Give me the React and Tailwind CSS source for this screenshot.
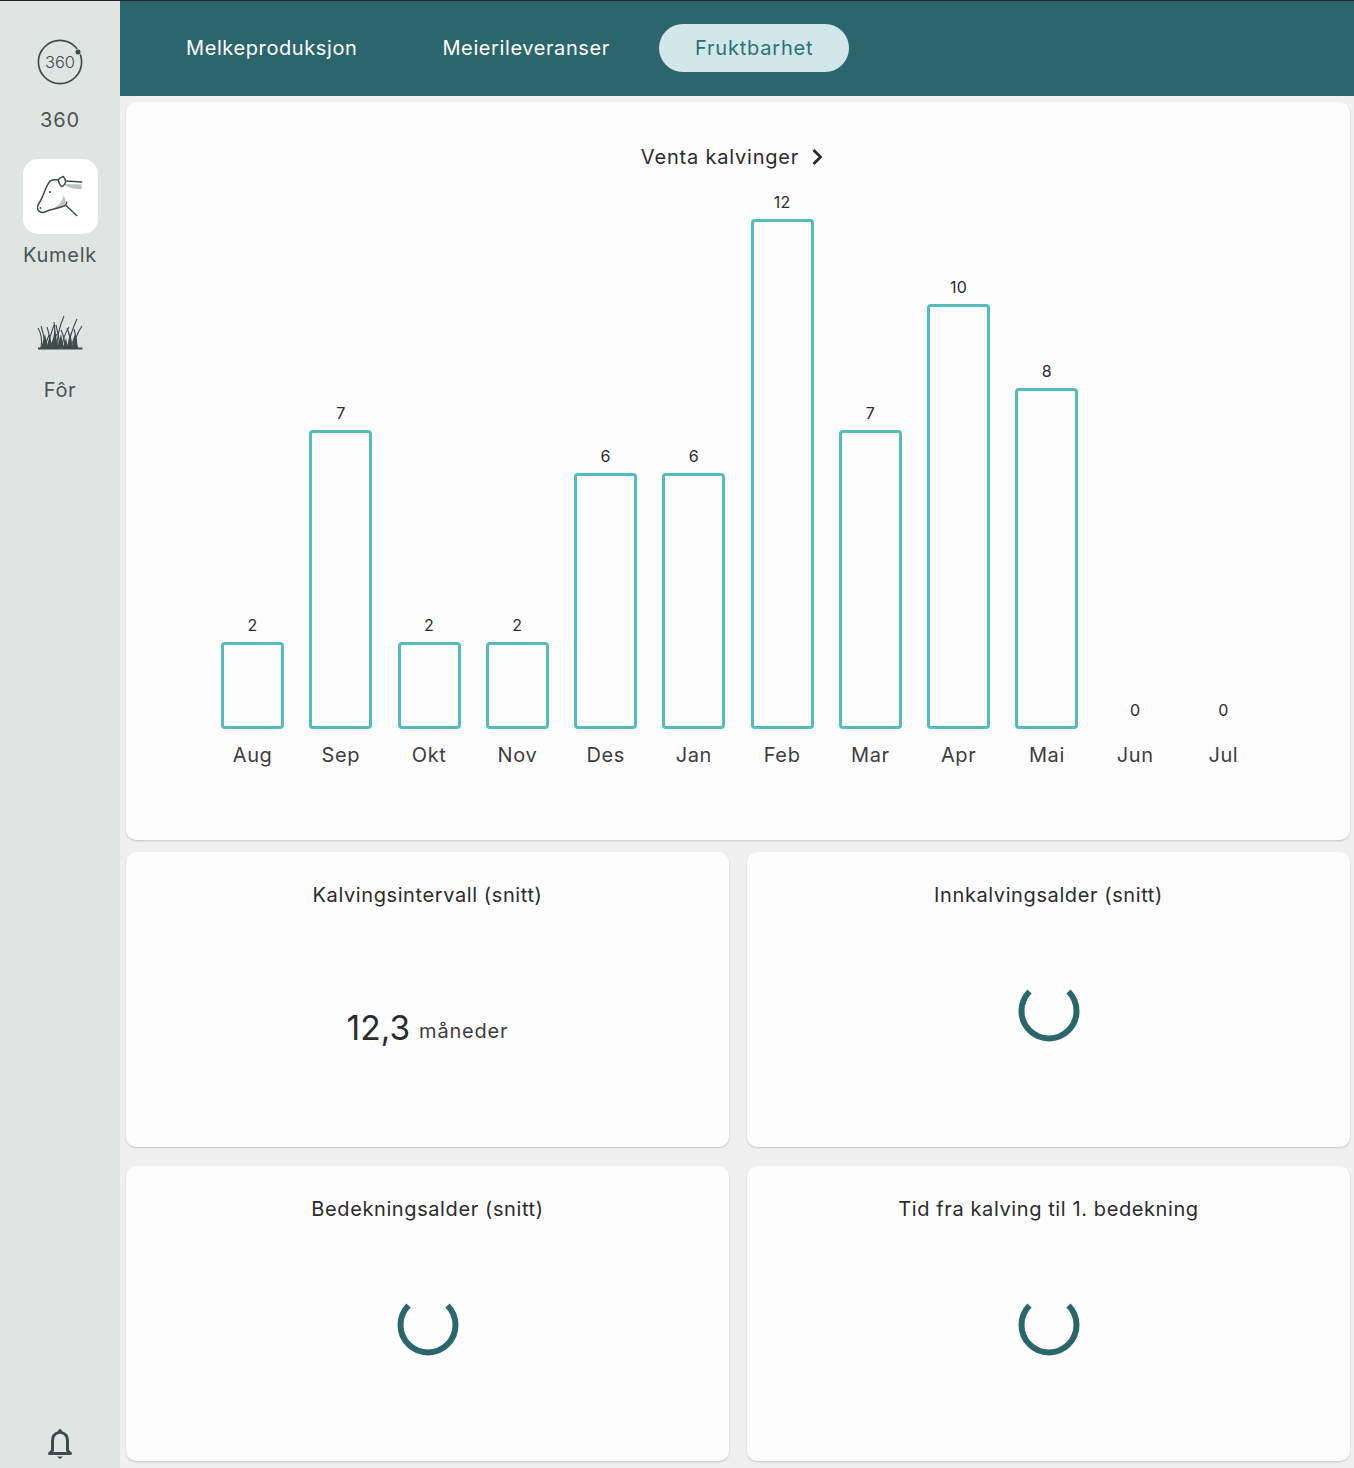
const months = [
  ["Aug", 2], ["Sep", 7], ["Okt", 2], ["Nov", 2], ["Des", 6], ["Jan", 6],
  ["Feb", 12], ["Mar", 7], ["Apr", 10], ["Mai", 8], ["Jun", 0], ["Jul", 0],
];

function Logo360() {
  return (
    <svg width="46" height="46" viewBox="0 0 46 46" fill="none">
      <circle cx="23" cy="23" r="21.6" stroke="#3f4a4b" strokeWidth="1.7" />
      <circle cx="41" cy="13" r="3" fill="#3f4a4b" stroke="#e0e5e4" strokeWidth="0.8" />
      <text x="23" y="28.5" textAnchor="middle" fontSize="16.5" fontWeight="300" fill="#3f4a4b" fontFamily="Inter, sans-serif">360</text>
    </svg>
  );
}

function Cow() {
  return (
    <svg width="46" height="46" viewBox="0 0 46 46" fill="none" strokeLinecap="round" strokeLinejoin="round">
      <path d="M28 10 L44.7 10.500 L44.700 15 Q35 15.500 28 11.500Z" fill="#bcc2c2" />
      <path d="M26.500 21 Q26.500 28 16.500 34.500 Q25 32.500 28.500 29 Q28.500 24 26.500 21Z" fill="#bcc2c2" />
      <path d="M29.700 7 L44.700 8" stroke="#3f4a4b" strokeWidth="1.500" />
      <path d="M21.300 5.800 Q16 5.500 13 7 Q10 11 8 16.500 Q5 25 0.800 31.500 Q0 35.500 1.800 36.800 Q4 38.500 6.500 38.500 Q12 36 18 34.800 Q24 33.500 28 31.500 Q29.500 30 29.700 28" stroke="#3f4a4b" strokeWidth="1.500" />
      <path d="M21.300 5.800 Q23.500 3 26.300 2.500 Q28.500 5 28.700 8 Q27 12 24.700 12.500 Q22 10.500 21.300 5.800Z" stroke="#3f4a4b" strokeWidth="1.400" />
      <path d="M29 31.500 L39.700 41.500" stroke="#3f4a4b" strokeWidth="1.500" />
      <circle cx="13" cy="18" r="1.100" fill="#3f4a4b" />
      <circle cx="3.500" cy="34" r="0.900" fill="#3f4a4b" />
    </svg>
  );
}

function Grass() {
  const blades = [
    "M4 34 Q6 22 1 14", "M8 34 Q8 24 4 12", "M10 34 Q13 22 17 11", "M14 34 Q13 22 10 13",
    "M17 34 Q19 20 17 8", "M20 34 Q20 18 27 2", "M23 34 Q22 22 19 11", "M25 34 Q26 22 32 13",
    "M28 34 Q28 24 24 16", "M31 34 Q33 20 40 5", "M34 34 Q34 24 30 14", "M37 34 Q38 22 45 12",
    "M40 34 Q40 24 37 15", "M12 34 Q16 26 20 20", "M6 34 Q10 28 12 21", "M33 34 Q36 28 38 22",
  ];
  return (
    <svg width="46" height="36" viewBox="0 0 46 36" fill="none">
      {blades.map((d, i) => (
        <path key={i} d={d} stroke="#3f4a4b" strokeWidth="1.100" />
      ))}
      <path d="M4 34 L8 20 L11 34Z M10 34 L13 22 L15 34Z M14 34 L18 15 L21 34Z M20 34 L24 20 L27 34Z M26 34 L29 24 L31 34Z M30 34 L33 18 L36 34Z M35 34 L38 20 L41 34Z" fill="#3f4a4b" />
      <path d="M1 34.500 H45.500" stroke="#3f4a4b" strokeWidth="1.800" />
    </svg>
  );
}

function Bell() {
  return (
    <svg width="26" height="30" viewBox="0 0 26 30" fill="none">
      <path d="M13 1.500 L14.500 3.600 Q20.500 5 20.500 12 V21.500 L23.500 24.500 H2.500 L5.500 21.500 V12 Q5.500 5 11.500 3.600Z" stroke="#3f4a4b" strokeWidth="3" strokeLinejoin="round" />
      <path d="M10 27.500 H16 L13 30Z" fill="#3f4a4b" />
    </svg>
  );
}

function Spinner() {
  return (
    <svg width="62" height="62" viewBox="0 0 62 62" fill="none" className="-mt-[30px]">
      <path d="M50.500 11.500 A27.500 27.500 0 1 1 11.500 11.500" stroke="#2b666d" strokeWidth="6" />
    </svg>
  );
}

function NavItem({ label, active, children, tracking }) {
  return (
    <div className="flex flex-col items-center">
      <div className={`flex h-[75px] w-[75px] items-center justify-center rounded-[15px] ${active ? "bg-white" : ""}`}>
        {children}
      </div>
      <div className={`mt-[9px] h-[24px] text-[20px] leading-[24px] text-[#4a5555] ${tracking}`}>{label}</div>
    </div>
  );
}

function Card({ title, children }) {
  return (
    <div className="flex h-[295px] flex-col rounded-[10px] bg-[#fdfdfd] shadow-[0_1px_2px_rgba(0,0,0,0.18)]">
      <div className="mt-[30px] h-[26px] text-center text-[20px] leading-[26px] tracking-[0.6px] text-[#2b2b2b]">{title}</div>
      <div className="flex flex-1 items-center justify-center pb-[4px]">{children}</div>
    </div>
  );
}

export default function App() {
  return (
    <div className="flex h-[1468px] w-[1354px] overflow-hidden bg-[#f0f0f0] font-['Inter',sans-serif]">
      <aside className="flex h-full w-[120px] shrink-0 flex-col items-center border-t border-[#222] bg-[#e0e5e4] pt-[23px]">
        <div className="flex flex-col gap-[27px]">
          <NavItem label="360" tracking="tracking-[0.8px]"><Logo360 /></NavItem>
          <NavItem label="Kumelk" active tracking="tracking-[0.7px]"><Cow /></NavItem>
          <NavItem label="Fôr" tracking="tracking-[0.7px]"><Grass /></NavItem>
        </div>
        <div className="mt-auto pb-[9px]"><Bell /></div>
      </aside>

      <main className="flex min-w-0 flex-1 flex-col">
        <header className="flex h-[96px] shrink-0 items-center gap-[12px] border-t border-[#222] bg-[#2b666d] pb-[2px] pl-[30px]">
          <div className="px-[36px] text-[20px] tracking-[0.6px] text-white">Melkeproduksjon</div>
          <div className="pl-[37px] pr-[37px] text-[20px] tracking-[0.6px] text-white">Meierileveranser</div>
          <div className="flex h-[48px] items-center rounded-full bg-[#d2e8e8] px-[36px] text-[20px] tracking-[0.8px] text-[#2b7278]">Fruktbarhet</div>
        </header>

        <div className="flex flex-col pl-[6px] pr-[4px] pt-[6px]">
          <section className="flex h-[738px] flex-col rounded-[10px] bg-[#fdfdfd] shadow-[0_1px_2px_rgba(0,0,0,0.18)]">
            <div className="mt-[41px] flex h-[28px] items-center justify-center gap-[12px] pr-[12px] text-[20px] tracking-[0.8px] text-[#2b2b2b]">
              <span>Venta kalvinger</span>
              <svg width="12" height="18" viewBox="0 0 12 18" fill="none">
                <path d="M2.500 2 L9.500 9 L2.500 16" stroke="#2b2b2b" strokeWidth="2.800" />
              </svg>
            </div>
            <div className="ml-[82.5px] flex h-[558px] items-end">
              {months.map(([m, v]) => (
                <div key={m} className="flex w-[88.25px] flex-col items-center">
                  <div className={`text-[16px] leading-[18px] tracking-[0.3px] text-[#2b2b2b] ${v > 0 ? "mb-[8px]" : "mb-[10px]"}`}>{v}</div>
                  {v > 0 && (
                    <div
                      className="w-[63px] rounded-[4px] border-[3px] border-[#55bcbc]"
                      style={{ height: v * 42.25 + 3 }}
                    />
                  )}
                </div>
              ))}
            </div>
            <div className="ml-[82.5px] mt-[14px] flex">
              {months.map(([m]) => (
                <div key={m} className="w-[88.25px] text-center text-[20px] leading-[24px] tracking-[0.6px] text-[#3d3d3d]">{m}</div>
              ))}
            </div>
          </section>

          <div className="mt-[12px] grid grid-cols-2 gap-x-[18px] gap-y-[19px]">
            <Card title="Kalvingsintervall (snitt)">
              <div className="mt-[4px] flex items-baseline gap-[9px] text-[#2b2b2b]">
                <span className="text-[33.5px] leading-[40px]">12,3</span>
                <span className="-translate-y-[2px] text-[20px] tracking-[0.8px] text-[#3d3d3d]">måneder</span>
              </div>
            </Card>
            <Card title="Innkalvingsalder (snitt)"><Spinner /></Card>
            <Card title="Bedekningsalder (snitt)"><Spinner /></Card>
            <Card title="Tid fra kalving til 1. bedekning"><Spinner /></Card>
          </div>
        </div>
      </main>
    </div>
  );
}
